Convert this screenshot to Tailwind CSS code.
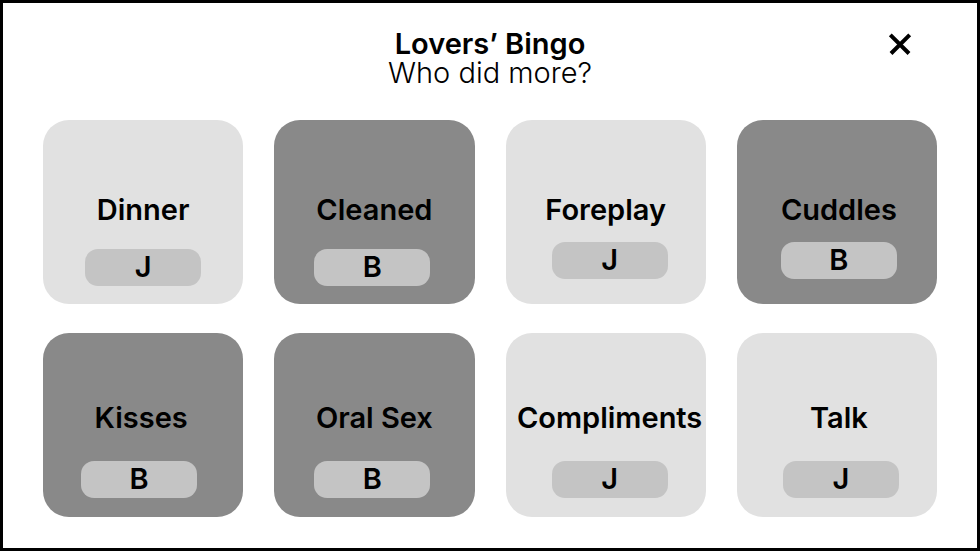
<!DOCTYPE html>
<html lang="en">
<head>
<meta charset="utf-8">
<meta name="viewport" content="width=device-width, initial-scale=1">
<title>Lovers’ Bingo</title>
<script src="https://cdn.jsdelivr.net/npm/@tailwindcss/browser@4"></script>
</head>
<body class="bg-white font-['Inter',sans-serif] text-black">
<main class="border-3 border-black px-[40px] pt-[26px] pb-[31px]">
  <header class="grid grid-cols-[1fr_auto_1fr] items-start">
    <div class="col-start-2 text-center text-[29px] leading-[29px]">
      <h1 class="font-semibold">Lovers’ Bingo</h1>
      <p class="font-light">Who did more?</p>
    </div>
    <button type="button" aria-label="Close" class="mr-[21px] justify-self-end p-1">
      <svg class="size-6" viewBox="0 0 24 24" fill="none" stroke="currentColor" stroke-width="4" aria-hidden="true"><path d="M2.300 1.800L21 20.500M21.700 1.800L3 20.500"/></svg>
    </button>
  </header>

  <section aria-label="Bingo board" class="mt-[33px] grid grid-cols-4 gap-x-[31px] gap-y-[29px] text-[29px] leading-9 font-semibold">
    <article class="flex flex-col items-center gap-[21px] rounded-[26px] bg-[#e1e1e1] pt-[72px] pb-[18px]">
      <h2>Dinner</h2>
      <button type="button" aria-label="Dinner: J" class="h-[37px] w-[116px] rounded-[13px] bg-[#c4c4c4] pb-0.5">J</button>
    </article>
    <article class="flex flex-col items-center gap-[21px] rounded-[26px] bg-[#898989] pt-[72px] pb-[18px]">
      <h2>Cleaned</h2>
      <button type="button" aria-label="Cleaned: B" class="mr-1 h-[37px] w-[116px] rounded-[13px] bg-[#c4c4c4] pb-0.5">B</button>
    </article>
    <article class="flex flex-col items-center gap-[14px] rounded-[26px] bg-[#e1e1e1] pt-[72px] pb-[18px]">
      <h2>Foreplay</h2>
      <button type="button" aria-label="Foreplay: J" class="ml-2 h-[37px] w-[116px] rounded-[13px] bg-[#c4c4c4] pb-0.5">J</button>
    </article>
    <article class="flex flex-col items-center gap-[14px] rounded-[26px] bg-[#898989] pt-[72px] pb-[18px]">
      <h2 class="ml-1">Cuddles</h2>
      <button type="button" aria-label="Cuddles: B" class="ml-1 h-[37px] w-[116px] rounded-[13px] bg-[#c4c4c4] pb-0.5">B</button>
    </article>

    <article class="flex flex-col items-center gap-[25px] rounded-[26px] bg-[#898989] pt-[67px] pb-[19px]">
      <h2 class="mr-1">Kisses</h2>
      <button type="button" aria-label="Kisses: B" class="mr-2 h-[37px] w-[116px] rounded-[13px] bg-[#c4c4c4] pb-0.5">B</button>
    </article>
    <article class="flex flex-col items-center gap-[25px] rounded-[26px] bg-[#898989] pt-[67px] pb-[19px]">
      <h2>Oral Sex</h2>
      <button type="button" aria-label="Oral Sex: B" class="mr-1 h-[37px] w-[116px] rounded-[13px] bg-[#c4c4c4] pb-0.5">B</button>
    </article>
    <article class="flex flex-col items-center gap-[25px] rounded-[26px] bg-[#e1e1e1] pt-[67px] pb-[19px]">
      <h2 class="ml-2">Compliments</h2>
      <button type="button" aria-label="Compliments: J" class="ml-2 h-[37px] w-[116px] rounded-[13px] bg-[#c4c4c4] pb-0.5">J</button>
    </article>
    <article class="flex flex-col items-center gap-[25px] rounded-[26px] bg-[#e1e1e1] pt-[67px] pb-[19px]">
      <h2 class="ml-1">Talk</h2>
      <button type="button" aria-label="Talk: J" class="ml-2 h-[37px] w-[116px] rounded-[13px] bg-[#c4c4c4] pb-0.5">J</button>
    </article>
  </section>
</main>
</body>
</html>
